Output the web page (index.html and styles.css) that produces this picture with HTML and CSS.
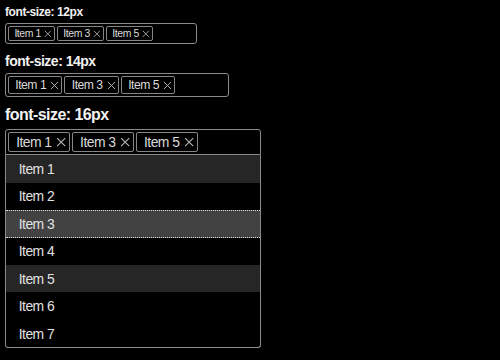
FILE: index.html
```html
<!DOCTYPE html>
<html>
<head>
<meta charset="utf-8">
<link rel="stylesheet" href="styles.css">
</head>
<body>
<section class="demo s12">
  <div class="label">font-size: 12px</div>
  <div class="box">
    <span class="chip"><span class="t">Item 1</span><svg class="x" viewBox="0 0 10 10"><path d="M1 1L9 9M9 1L1 9"/></svg></span>
    <span class="chip"><span class="t">Item 3</span><svg class="x" viewBox="0 0 10 10"><path d="M1 1L9 9M9 1L1 9"/></svg></span>
    <span class="chip"><span class="t">Item 5</span><svg class="x" viewBox="0 0 10 10"><path d="M1 1L9 9M9 1L1 9"/></svg></span>
  </div>
</section>
<section class="demo s14">
  <div class="label">font-size: 14px</div>
  <div class="box">
    <span class="chip"><span class="t">Item 1</span><svg class="x" viewBox="0 0 10 10"><path d="M1 1L9 9M9 1L1 9"/></svg></span>
    <span class="chip"><span class="t">Item 3</span><svg class="x" viewBox="0 0 10 10"><path d="M1 1L9 9M9 1L1 9"/></svg></span>
    <span class="chip"><span class="t">Item 5</span><svg class="x" viewBox="0 0 10 10"><path d="M1 1L9 9M9 1L1 9"/></svg></span>
  </div>
</section>
<section class="demo s16">
  <div class="label">font-size: 16px</div>
  <div class="box open">
    <span class="chip"><span class="t">Item 1</span><svg class="x" viewBox="0 0 10 10"><path d="M1 1L9 9M9 1L1 9"/></svg></span>
    <span class="chip"><span class="t">Item 3</span><svg class="x" viewBox="0 0 10 10"><path d="M1 1L9 9M9 1L1 9"/></svg></span>
    <span class="chip"><span class="t">Item 5</span><svg class="x" viewBox="0 0 10 10"><path d="M1 1L9 9M9 1L1 9"/></svg></span>
  </div>
  <ul class="list">
    <li class="opt sel"><span class="t">Item 1</span></li>
    <li class="opt"><span class="t">Item 2</span></li>
    <li class="opt focus"><span class="t">Item 3</span></li>
    <li class="opt"><span class="t">Item 4</span></li>
    <li class="opt sel"><span class="t">Item 5</span></li>
    <li class="opt"><span class="t">Item 6</span></li>
    <li class="opt"><span class="t">Item 7</span></li>
  </ul>
</section>
</body>
</html>
```
FILE: styles.css
```css
html, body {
  background: #000;
}
body {
  margin: 0;
  padding: 6px 5px;
  color: #e0e0e0;
  font-family: "Liberation Sans", Arial, sans-serif;
}
.demo {
  margin-bottom: 9px;
  width: 16em;
}
.s12 { font-size: 12px; }
.s14 { font-size: 14px; }
.s16 { font-size: 16px; }
.label {
  font-weight: bold;
  color: #f2f2f2;
  line-height: 1.15;
  letter-spacing: -0.035em;
  margin-bottom: 0.25em;
}
.t {
  font-size: 0.87em;
  letter-spacing: -0.04em;
}
.box {
  display: flex;
  gap: 2px;
  padding: 2px;
  border: 1px solid #8a8a8a;
  border-radius: 3px;
  box-sizing: border-box;
  width: 16em;
}
.box.open {
  border-radius: 3px 3px 0 0;
}
.chip {
  display: inline-flex;
  align-items: center;
  gap: 0.3em;
  box-sizing: border-box;
  height: 1.3em;
  padding: 0 0.15em 0 0.45em;
  border: 1px solid #858585;
  border-radius: 2px;
  color: #dadada;
}
.x {
  width: 0.64em;
  height: 0.64em;
  stroke: #b5b5b5;
  stroke-width: 1.1;
  fill: none;
}
.list {
  list-style: none;
  margin: 0;
  padding: 0;
  border: 1px solid #8a8a8a;
  border-top: none;
  border-radius: 0 0 3px 3px;
  width: 16em;
  box-sizing: border-box;
}
.opt {
  box-sizing: border-box;
  height: 1.714em;
  display: flex;
  align-items: center;
  padding-left: 0.8em;
  color: #e2e2e2;
}
.opt.sel {
  background: #262626;
}
.opt.focus {
  background: #424242;
  border-top: 1px dotted #e0e0e0;
  border-bottom: 1px dotted #e0e0e0;
}
```
